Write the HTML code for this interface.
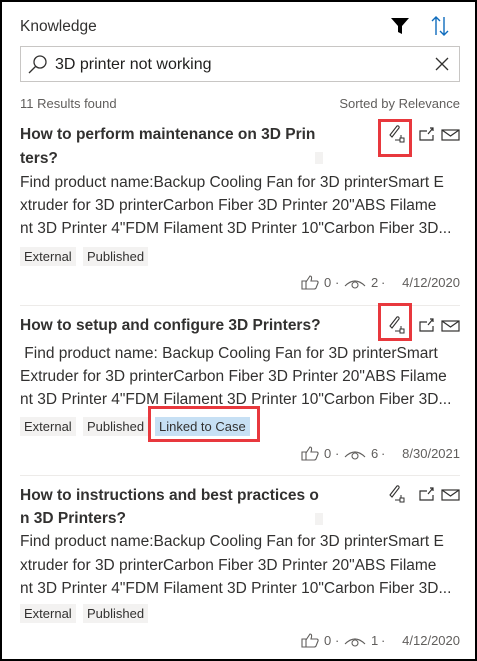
<!DOCTYPE html>
<html><head><meta charset="utf-8"><style>
*{margin:0;padding:0;box-sizing:border-box}
body{width:477px;height:661px;overflow:hidden;background:#fff;font-family:"Liberation Sans","DejaVu Sans",sans-serif;color:#323130;position:relative}
.frame{position:absolute;left:0;top:0;width:477px;height:661px;border:2px solid #000}
.abs{position:absolute;white-space:nowrap}
.h{left:20px;top:18px;font-size:15.5px;color:#323130}
.search{left:20px;top:46px;width:440px;height:36px;border:1px solid #c8c6c4}
.st{left:55px;top:56px;font-size:16px;color:#201f1e}
.small{font-size:13px;color:#605e5c}
.title{font-size:15.5px;font-weight:bold;color:#323130;left:20px}
.desc{font-size:15.5px;color:#323130;left:20px;width:438px;overflow:hidden}
.tag{position:absolute;height:19px;line-height:19px;font-size:13px;background:#f3f2f1;padding:0 4px;color:#323130}
.tag.l{background:#c7e0f4}
.sep{position:absolute;left:20px;width:440px;height:1px;background:#edebe9}
.dot{position:absolute;width:8px;height:12px;background:#f3f2f1}
.red{position:absolute;border:3px solid #e8383d}
.foot{font-size:13px;color:#605e5c;position:absolute;white-space:nowrap}
</style></head><body>
<div class="frame"></div>
<div class="abs h">Knowledge</div>
<svg class="abs" style="left:390px;top:17px" width="20" height="18" viewBox="0 0 20 18"><path d="M1 1H19L12 9V17L8 15V9Z" fill="#000"/></svg>
<svg class="abs" style="left:430px;top:16px" width="20" height="20" viewBox="0 0 20 20" fill="none" stroke="#0f6cbd" stroke-width="1.4"><path d="M6 19V1M2 5L6 1L10 5M14 1V19M10 15L14 19L18 15"/></svg>
<div class="abs search"></div>
<svg class="abs" style="left:28px;top:54px" width="20" height="20" viewBox="0 0 20 20" fill="none" stroke="#323130" stroke-width="1.3"><circle cx="12" cy="8" r="6"/><path d="M8 12L1 19"/></svg>
<div class="abs st">3D printer not working</div>
<svg class="abs" style="left:435px;top:57px" width="14" height="14" viewBox="0 0 14 14" stroke="#323130" stroke-width="1.3"><path d="M1 1L13 13M13 1L1 13"/></svg>
<div class="abs small" style="left:20px;top:96px">11 Results found</div>
<div class="abs small" style="right:17px;top:96px">Sorted by Relevance</div>

<svg width="0" height="0" style="position:absolute"><defs>
<g id="ic">
<path d="M3 12L10 3a1.5 1.5 0 0 1 2 2L5 14Z" fill="none" stroke="#323130" stroke-width="1.1"/>
<path d="M14 12V17H8" fill="none" stroke="#323130"/><rect x="13" y="15" width="4" height="4" fill="#fff" stroke="#323130"/>
<path d="M40 8H33V17H46V12" fill="none" stroke="#323130" stroke-width="1.2"/><path d="M41 11L46 5M43 5H46V8" fill="none" stroke="#323130" stroke-width="1.2"/>
<rect x="55" y="7" width="17" height="10" fill="none" stroke="#323130" stroke-width="1.2"/><path d="M55 7L63.5 13L72 7" fill="none" stroke="#323130" stroke-width="1.2"/>
</g>
<g id="ft" fill="none" stroke="#605e5c" stroke-width="1.1">
<path d="M1 7H5V15H1ZM5 8L9 2Q11 2 10.5 5L10 7H16Q17.5 7.5 17 9L15 14Q14.5 15 13 15H5"/>
<path d="M44 12Q54 2 64 12"/><circle cx="54" cy="11" r="3"/>
</g></defs></svg>

<div class="abs title" style="top:126px">How to perform maintenance on 3D Prin</div>
<div class="abs title" style="top:150px">ters?</div>
<div class="dot" style="left:315px;top:152px"></div>
<svg class="abs" style="left:387px;top:123px" width="75" height="22"><use href="#ic"/></svg>
<div class="red" style="left:378px;top:119px;width:34px;height:38px"></div>
<div class="abs desc" style="top:174px">Find product name:Backup Cooling Fan for 3D printerSmart E</div>
<div class="abs desc" style="top:197px">xtruder for 3D printerCarbon Fiber 3D Printer 20"ABS Filame</div>
<div class="abs desc" style="top:220px">nt 3D Printer 4"FDM Filament 3D Printer 10"Carbon Fiber 3D...</div>
<div class="tag" style="left:20px;top:247px">External</div>
<div class="tag" style="left:83px;top:247px">Published</div>
<svg class="abs" style="left:301px;top:274px" width="70" height="17"><use href="#ft"/></svg>
<div class="foot" style="left:324px;top:275px">0</div><div class="foot" style="left:335px;top:275px">·</div>
<div class="foot" style="left:371px;top:275px">2</div><div class="foot" style="left:381px;top:275px">·</div>
<div class="foot" style="right:17px;top:275px">4/12/2020</div>
<div class="sep" style="top:305px"></div>

<div class="abs title" style="top:317px">How to setup and configure 3D Printers?</div>
<svg class="abs" style="left:387px;top:314px" width="75" height="22"><use href="#ic"/></svg>
<div class="red" style="left:378px;top:303px;width:34px;height:38px"></div>
<div class="abs desc" style="top:345px">&nbsp;Find product name: Backup Cooling Fan for 3D printerSmart</div>
<div class="abs desc" style="top:368px">Extruder for 3D printerCarbon Fiber 3D Printer 20"ABS Filame</div>
<div class="abs desc" style="top:391px">nt 3D Printer 4"FDM Filament 3D Printer 10"Carbon Fiber 3D...</div>
<div class="tag" style="left:20px;top:417px">External</div>
<div class="tag" style="left:83px;top:417px">Published</div>
<div class="tag l" style="left:155px;top:417px">Linked to Case</div>
<div class="red" style="left:148px;top:406px;width:112px;height:36px"></div>
<svg class="abs" style="left:301px;top:445px" width="70" height="17"><use href="#ft"/></svg>
<div class="foot" style="left:324px;top:446px">0</div><div class="foot" style="left:335px;top:446px">·</div>
<div class="foot" style="left:371px;top:446px">6</div><div class="foot" style="left:381px;top:446px">·</div>
<div class="foot" style="right:17px;top:446px">8/30/2021</div>
<div class="sep" style="top:475px"></div>

<div class="abs title" style="top:487px">How to instructions and best practices o</div>
<div class="abs title" style="top:510px">n 3D Printers?</div>
<div class="dot" style="left:315px;top:513px"></div>
<svg class="abs" style="left:387px;top:483px" width="75" height="22"><use href="#ic"/></svg>
<div class="abs desc" style="top:533px">Find product name:Backup Cooling Fan for 3D printerSmart E</div>
<div class="abs desc" style="top:557px">xtruder for 3D printerCarbon Fiber 3D Printer 20"ABS Filame</div>
<div class="abs desc" style="top:580px">nt 3D Printer 4"FDM Filament 3D Printer 10"Carbon Fiber 3D...</div>
<div class="tag" style="left:20px;top:604px">External</div>
<div class="tag" style="left:83px;top:604px">Published</div>
<svg class="abs" style="left:301px;top:632px" width="70" height="17"><use href="#ft"/></svg>
<div class="foot" style="left:324px;top:633px">0</div><div class="foot" style="left:335px;top:633px">·</div>
<div class="foot" style="left:371px;top:633px">1</div><div class="foot" style="left:381px;top:633px">·</div>
<div class="foot" style="right:17px;top:633px">4/12/2020</div>
</body></html>
